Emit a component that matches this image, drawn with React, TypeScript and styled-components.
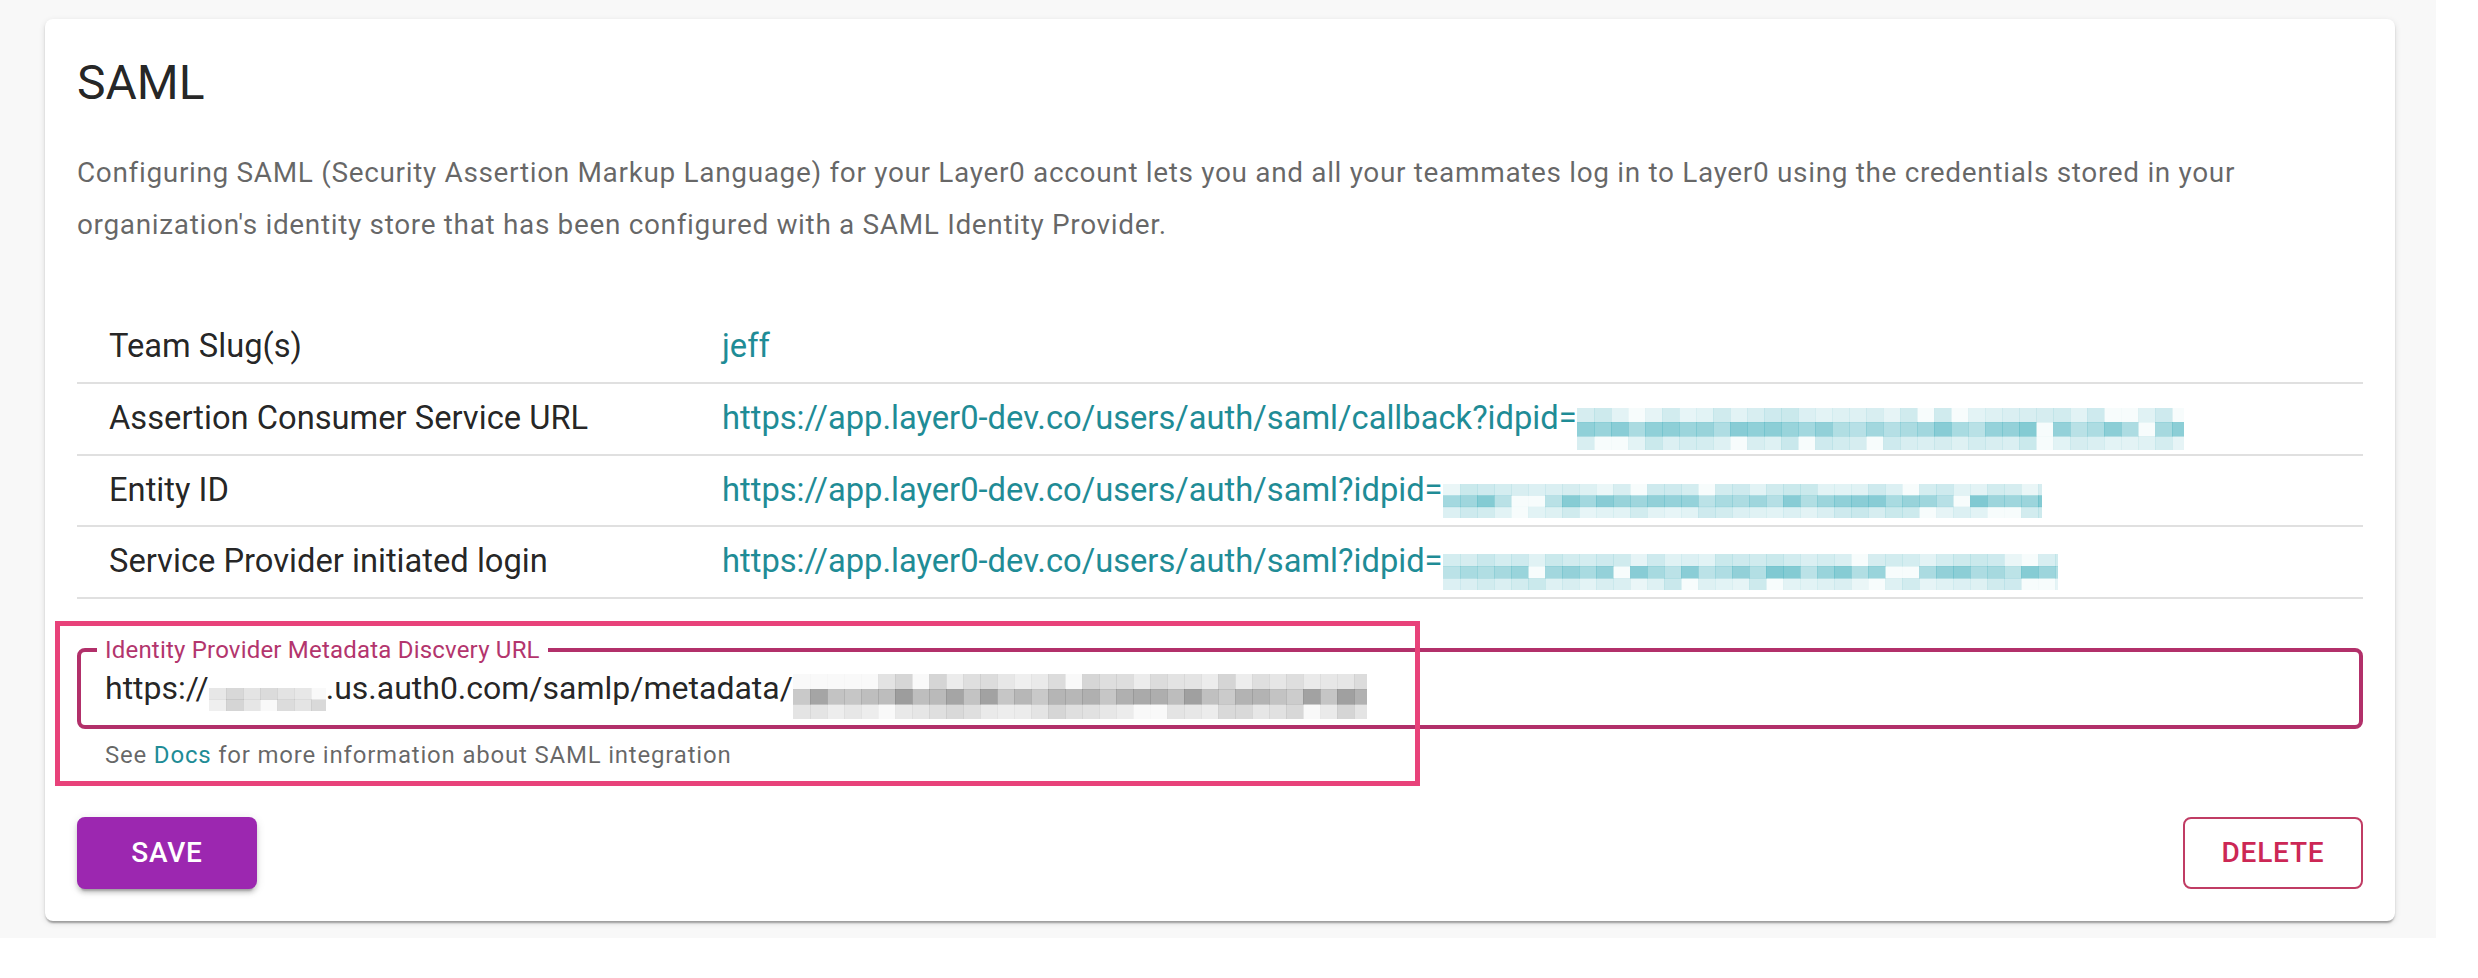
import React from "react";
import styled, { createGlobalStyle } from "styled-components";

const GlobalStyle = createGlobalStyle`
  html, body { margin: 0; padding: 0; background: #ffffff; }
  body { font-family: Roboto, "Liberation Sans", sans-serif; }
  * { box-sizing: border-box; }
`;

const TEAL = "#1f8c96";

const Page = styled.div`
  width: 2436px;
  background: #f8f8f8;
  padding: 19px 41px 17px 45px;
`;

const Card = styled.section`
  background: #ffffff;
  border-radius: 8px;
  box-shadow: 0 4px 2px -2px rgba(0, 0, 0, 0.2), 0 2px 2px 0 rgba(0, 0, 0, 0.14),
    0 2px 6px 0 rgba(0, 0, 0, 0.12);
  padding: 32px;
`;

const Title = styled.h2`
  margin: 0;
  font-family: Roboto, sans-serif;
  font-weight: 400;
  font-size: 48px;
  line-height: 64px;
  color: rgba(0, 0, 0, 0.87);
`;

const Description = styled.p`
  margin: 32px 0 0;
  font-family: Roboto, sans-serif;
  font-size: 28px;
  line-height: 52px;
  letter-spacing: 0.65px;
  color: rgba(0, 0, 0, 0.6);
`;

const InfoTable = styled.div`
  margin-top: 61px;
`;

const Row = styled.div`
  display: grid;
  grid-template-columns: 613px 1fr;
  border-bottom: 2px solid #e0e0e0;
`;

const Cell = styled.div<{ $link?: boolean }>`
  padding: 16px 32px;
  font-family: Roboto, sans-serif;
  font-size: 32.7px;
  line-height: 37.6px;
  white-space: nowrap;
  color: ${(p) => (p.$link ? TEAL : "rgba(0, 0, 0, 0.87)")};
`;

const FieldBlock = styled.div`
  position: relative;
  margin-top: 49px;
`;

const Field = styled.div`
  position: relative;
  height: 81px;
  border: 4px solid #b2306a;
  border-radius: 8px;
  display: flex;
  align-items: center;
  padding: 0 24px;
  font-family: Roboto, sans-serif;
  font-size: 32px;
  white-space: nowrap;
  color: rgba(0, 0, 0, 0.87);
`;

const FloatingLabel = styled.span`
  position: absolute;
  top: -14px;
  left: 16px;
  padding: 0 8px;
  background: #ffffff;
  font-family: Roboto, sans-serif;
  font-size: 24px;
  line-height: 24px;
  letter-spacing: 0.2px;
  color: #b3356d;
`;

const Helper = styled.div`
  margin-top: 6px;
  padding-left: 28px;
  font-family: Roboto, sans-serif;
  font-size: 24px;
  line-height: 40px;
  letter-spacing: 0.8px;
  color: rgba(0, 0, 0, 0.6);
`;

const HelperLink = styled.a`
  color: ${TEAL};
  text-decoration: none;
`;

const Highlight = styled.div`
  position: absolute;
  top: -27px;
  left: -22px;
  width: 1365px;
  height: 165px;
  border: 5px solid #e8427a;
  pointer-events: none;
`;

const Actions = styled.div`
  margin-top: 42px;
  display: flex;
  justify-content: space-between;
`;

const Button = styled.button<{ $variant: "contained" | "outlined" }>`
  width: 180px;
  height: 72px;
  border-radius: 8px;
  font-family: Roboto, sans-serif;
  font-weight: 500;
  font-size: 28px;
  letter-spacing: 0.8px;
  text-transform: uppercase;
  cursor: pointer;
  ${(p) =>
    p.$variant === "contained"
      ? `
    background: #9c27b0;
    color: #ffffff;
    border: none;
    box-shadow: 0 6px 2px -4px rgba(0,0,0,0.2), 0 4px 4px 0 rgba(0,0,0,0.14), 0 2px 10px 0 rgba(0,0,0,0.12);
  `
      : `
    background: transparent;
    color: #cc2755;
    border: 2px solid #c03c64;
  `}
`;

const MosaicSvg = styled.svg<{ $drop: number }>`
  display: inline-block;
  vertical-align: ${(p) => -p.$drop}px;
  margin: -12px 0;
`;

function rand(seed: number) {
  let s = seed;
  return () => {
    s = (s * 9301 + 49297) % 233280;
    return s / 233280;
  };
}

type MosaicProps = {
  width: number;
  height: number;
  drop: number;
  tone: "teal" | "gray";
  seed: number;
  rows?: number;
};

function Mosaic({ width, height, drop, tone, seed, rows = 3 }: MosaicProps) {
  const r = rand(seed);
  const cell = 17;
  const cols = Math.ceil(width / cell);
  const rh = height / rows;
  const rects: React.ReactNode[] = [];
  const base = tone === "teal" ? "60,172,186" : "105,105,105";
  for (let y = 0; y < rows; y++) {
    const mid = rows === 3 ? y === 1 : y > 0 && y < rows - 1;
    for (let x = 0; x < cols; x++) {
      const v = r();
      let a = mid ? 0.3 + v * 0.35 : 0.08 + v * 0.2;
      if (v < 0.12) a = 0.04;
      rects.push(
        <rect
          key={`${x}-${y}`}
          x={x * cell}
          y={y * rh}
          width={cell + 0.5}
          height={rh + 0.5}
          fill={`rgba(${base},${a.toFixed(2)})`}
        />
      );
    }
  }
  return (
    <MosaicSvg width={width} height={height} $drop={drop} viewBox={`0 0 ${width} ${height}`}>
      {rects}
    </MosaicSvg>
  );
}

const rows = [
  { label: "Team Slug(s)", value: "jeff" },
  {
    label: "Assertion Consumer Service URL",
    value: "https://app.layer0-dev.co/users/auth/saml/callback?idpid=",
    mosaic: { width: 607, height: 42, drop: 9, seed: 11 },
  },
  {
    label: "Entity ID",
    value: "https://app.layer0-dev.co/users/auth/saml?idpid=",
    mosaic: { width: 599, height: 34, drop: 5, seed: 23 },
  },
  {
    label: "Service Provider initiated login",
    value: "https://app.layer0-dev.co/users/auth/saml?idpid=",
    mosaic: { width: 615, height: 36, drop: 6, seed: 37 },
  },
];

export default function App() {
  return (
    <>
      <GlobalStyle />
      <Page>
        <Card>
          <Title>SAML</Title>
          <Description>
            Configuring SAML (Security Assertion Markup Language) for your Layer0 account lets you
            and all your teammates log in to Layer0 using the credentials stored in your
            organization's identity store that has been configured with a SAML Identity Provider.
          </Description>
          <InfoTable>
            {rows.map((row) => (
              <Row key={row.label}>
                <Cell>{row.label}</Cell>
                <Cell $link>
                  {row.value}
                  {row.mosaic && (
                    <Mosaic
                      width={row.mosaic.width}
                      height={row.mosaic.height}
                      drop={row.mosaic.drop}
                      tone="teal"
                      seed={row.mosaic.seed}
                    />
                  )}
                </Cell>
              </Row>
            ))}
          </InfoTable>
          <FieldBlock>
            <Field>
              <FloatingLabel>Identity Provider Metadata Discvery URL</FloatingLabel>
              <span>
                https://
                <Mosaic width={117} height={23} drop={0} tone="gray" seed={5} rows={2} />
                .us.auth0.com/samlp/metadata/
                <Mosaic width={574} height={45} drop={8} tone="gray" seed={71} />
              </span>
            </Field>
            <Helper>
              See <HelperLink href="#">Docs</HelperLink> for more information about SAML integration
            </Helper>
            <Highlight />
          </FieldBlock>
          <Actions>
            <Button $variant="contained">Save</Button>
            <Button $variant="outlined">Delete</Button>
          </Actions>
        </Card>
      </Page>
    </>
  );
}
